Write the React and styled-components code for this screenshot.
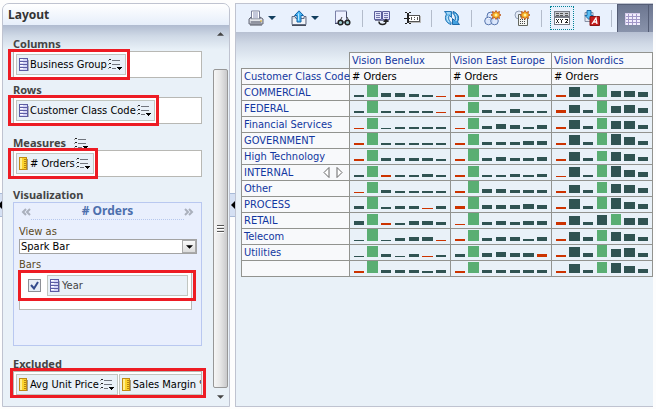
import React, { useState } from "react";
import styled, { createGlobalStyle } from "styled-components";

const GlobalStyle = createGlobalStyle`
  *, *::before, *::after { box-sizing: border-box; }
  body {
    margin: 0;
    background: #fdfdfd;
    color: #000;
    font-family: Tahoma, "DejaVu Sans Condensed", "Noto Sans", sans-serif;
    font-size: 11px;
    line-height: 14px;
  }
  h1, h2, h3 { font-family: Tahoma, "Noto Sans", sans-serif; }
  button, select { font: inherit; color: inherit; }
  button { border: 0; padding: 0; background: none; cursor: pointer; }
  svg { display: block; flex: none; }
`;

const Page = styled.div`
  display: flex;
  min-height: 100vh;
  padding: 3px 3px 3px 0;
`;

const Splitter = styled.div`
  flex: none;
  width: ${(p) => p.$width};
  padding-top: 190px;
  overflow: hidden;
`;

const SplitHandle = styled.button`
  display: flex;
  align-items: center;
  justify-content: flex-end;
  width: 100%;
  height: 24px;
  border: solid #a9bbd8;
  border-width: 1px 0;
  background: #d5e0f3;
`;

const Panel = styled.section`
  display: flex;
  flex-direction: column;
  border: 1px solid #bfc3d0;
  border-right-width: ${(p) => (p.$openRight ? "0" : "1px")};
  border-radius: ${(p) => p.$radius};
  background: #e9f1f8;
  overflow: hidden;
  flex: ${(p) => p.$flex};
  min-width: 0;
`;

const PanelTitle = styled.h1`
  margin: 0;
  height: 21px;
  padding: 3px 5px 0;
  background: linear-gradient(#ffffff, #e6eefa);
  color: #333;
  font-size: 12px;
  line-height: 16px;
`;

const PanelBody = styled.div`
  display: flex;
  flex: 1;
  background: linear-gradient(#b0bbd0, #cfd9e6 11px, #e9f1f8 25px);
`;

const Fields = styled.div`
  flex: 1;
  min-width: 0;
  padding: 12px 11px 8px 10px;
`;

const Field = styled.section`
  margin-bottom: ${(p) => p.$gap};
`;

const FieldTitle = styled.h2`
  display: flex;
  align-items: center;
  gap: 8px;
  margin: 0;
  height: 14px;
  color: #444;
  font-size: 11px;
  line-height: 14px;
`;

const DropZone = styled.div`
  display: flex;
  position: relative;
  height: 27px;
  padding: 2px;
  border: 1px solid #b8b8b4;
  background: #fff;
`;

const ClipRow = styled.div`
  display: flex;
  flex: 1;
  gap: 1px;
  min-width: 0;
  margin-right: -2px;
  overflow: hidden;
`;

const Chip = styled.div`
  display: flex;
  position: relative;
  flex: none;
  align-items: center;
  gap: 1px;
  height: 21px;
  padding: 0 2px 0 1px;
  border: 1px solid #c1c6c1;
  background: #e9f1f8;
  white-space: nowrap;
`;

const Highlight = styled.span`
  position: absolute;
  inset: ${(p) => p.$inset};
  border: 3px solid #ed1c24;
  pointer-events: none;
`;

const VisualBox = styled.div`
  display: flex;
  flex-direction: column;
  min-height: 144px;
  padding: 0 5px;
  border: 1px solid #b9c8f0;
  background: #e9effd;
`;

const Pager = styled.div`
  display: flex;
  align-items: center;
  justify-content: space-between;
  height: 17px;
  padding: 0 2px;
`;

const PagerTitle = styled.h3`
  margin: 0;
  flex: 1;
  align-self: stretch;
  border-bottom: 1px dotted #b5c7ee;
  color: #4d70ad;
  font-size: 12px;
  line-height: 16px;
  text-align: center;
`;

const Caption = styled.label`
  display: block;
  margin-top: ${(p) => p.$top};
  color: #5b4a24;
`;

const SelectWrap = styled.div`
  display: grid;
  grid-template-columns: 1fr 14px;
  align-items: center;
  height: 15px;
  margin-right: -1px;
  border: 1px solid #a3a3a3;
  background: #fff;
`;

const Select = styled.select`
  grid-area: 1 / 1 / 2 / 3;
  width: 100%;
  height: 13px;
  padding: 0 1px;
  border: 0;
  background: transparent;
  line-height: 13px;
  appearance: none;
`;

const SelectArrow = styled.span`
  display: grid;
  grid-area: 1 / 2;
  place-items: center;
  height: 13px;
  border: 1px solid #aaa;
  background: linear-gradient(#fafafa, #dcdcdc);
  pointer-events: none;
`;

const BarsList = styled.div`
  display: flex;
  position: relative;
  align-items: flex-start;
  height: 38px;
  margin-right: 4px;
  padding: 2px 3px 0 8px;
  border: 1px solid #b8b8b4;
  background: #fff;
`;

const BarsRow = styled.div`
  display: flex;
  flex: 1;
  align-items: center;
  gap: 6px;
`;

const CheckWrap = styled.span`
  display: grid;
  place-items: center;
  width: 13px;
  height: 13px;
  border: 1px solid #8c8f96;
  background: #e6edf5;
  & > * { grid-area: 1 / 1; }
`;

const Check = styled.input`
  width: 11px;
  height: 11px;
  margin: 0;
  appearance: none;
`;

const YearChip = styled.label`
  display: flex;
  flex: 1;
  align-items: center;
  gap: 2px;
  height: 21px;
  padding-left: 1px;
  border: 1px solid #c1c6c1;
  background: #e9f1f8;
  color: #444;
`;

const ScrollRail = styled.div`
  display: flex;
  flex: none;
  flex-direction: column;
  align-items: center;
  width: 16px;
  padding-right: 1px;
`;

const ScrollArrow = styled.button`
  display: grid;
  place-items: center;
  width: 100%;
  height: 18px;
`;

const ScrollTrack = styled.div`
  display: flex;
  flex: 1;
  flex-direction: column;
  width: 100%;
  padding-top: 26px;
`;

const ScrollThumb = styled.div`
  display: grid;
  flex: 1;
  place-items: center;
  border: 1px solid #979797;
  border-radius: 2px;
  background: linear-gradient(90deg, #f6f6f6, #e8e8e8 45%, #c9c9cb);
`;

const Toolbar = styled.div`
  display: flex;
  flex: none;
  align-items: center;
  height: 28px;
  padding-left: 12px;
  background: #e9f1fd;
  overflow: hidden;
`;

const Tool = styled.button`
  display: flex;
  flex: none;
  align-items: center;
  gap: 4px;
  margin-right: ${(p) => p.$after};
`;

const OutlinedTool = styled(Tool)`
  justify-content: center;
  width: 24px;
  height: 24px;
  border: 1px dotted #008296;
`;

const PressedTool = styled(Tool)`
  justify-content: center;
  width: 31px;
  height: 28px;
  border: solid #545d75;
  border-width: 1px 0 0 1px;
  background: linear-gradient(#6c7690, #8993ab);
`;

const Divider = styled.span`
  flex: none;
  width: 1px;
  height: 17px;
  margin-right: ${(p) => p.$after};
  background: #b3bccb;
`;

const Canvas = styled.div`
  flex: 1;
  padding: 20px 0 20px 5px;
  background: linear-gradient(#b7c0d2, #d0d9e6 12px, #e9f1f8 30px);
`;

const Pivot = styled.table`
  width: 100%;
  table-layout: fixed;
  border-collapse: collapse;
  line-height: 14px;
`;

const LabelCol = styled.col`
  width: 108px;
`;

const Corner = styled.td`
  padding: 0;
`;

const HeadCell = styled.th`
  height: 16px;
  padding: 0 0 0 2px;
  border: 1px solid #92938f;
  background: #f8f9fb;
  color: ${(p) => (p.$plain ? "#000" : "#1237a0")};
  font-weight: 400;
  line-height: 15px;
  text-align: left;
  white-space: nowrap;
`;

const HeadInner = styled.span`
  display: flex;
  align-items: center;
  justify-content: space-between;
  height: 15px;
`;

const MoveMarks = styled.span`
  display: flex;
  gap: 6px;
  padding-right: 6px;
`;

const DataCell = styled.td`
  height: 16px;
  padding: 0 0 0 4px;
  border: 1px solid #92938f;
  background: #e9f1f8;
  vertical-align: top;
`;

const ColumnIcon = () => (
  <svg width="11" height="15" viewBox="0 0 11 15" shapeRendering="crispEdges" aria-hidden="true">
    <path d="M3 14h8V3h-1v10H3z" fill="#a9acbb" />
    <rect x="1" y="1" width="9" height="13" fill="#5c5ca3" />
    <path d="M2 2h7v2H2zM2 5h7v2H2zM2 8h7v2H2zM2 11h7v2H2z" fill="#d5d5f7" />
    <path d="M2 2h3v1H2zM2 5h3v1H2zM2 8h3v1H2zM2 11h3v1H2z" fill="#fff" />
  </svg>
);

const MeasureIcon = () => (
  <svg width="11" height="15" viewBox="0 0 11 15" shapeRendering="crispEdges" aria-hidden="true">
    <path d="M3 14h7V3h-1v10H3z" fill="#a29a87" />
    <rect x="1" y="1" width="8" height="13" fill="#c08a14" />
    <rect x="2" y="2" width="6" height="11" fill="#fbd32c" />
    <path d="M2 2h2v11H2z" fill="#ffee8c" />
    <path d="M6 3h2v1H6zM6 5h2v1H6zM6 7h2v1H6zM6 9h2v1H6zM6 11h2v1H6z" fill="#b8860f" />
  </svg>
);

const MenuIcon = () => (
  <svg width="15" height="13" viewBox="0 0 15 13" shapeRendering="crispEdges" aria-hidden="true">
    <path d="M1 1h2v1H1zM1 5h2v1H1zM1 9h2v1H1z" fill="#222" />
    <path d="M0 2h1v1H0zM0 6h1v1H0zM0 10h1v1H0z" fill="#999" />
    <path d="M4 2h8v1H4zM4 6h8v1H4zM4 10h4v1H4z" fill="#70757d" />
    <path d="M9 9h5v1H9zM10 10h3v1h-3zM11 11h1v1h-1z" fill="#000" />
  </svg>
);

const Triangle = ({ up, color = "#000", width = 7 }) => (
  <svg width={width} height="4" viewBox="0 0 8 4" aria-hidden="true">
    <path d={up ? "M0 4L4 0l4 4z" : "M0 0h8L4 4z"} fill={color} />
  </svg>
);

const SideArrow = () => (
  <svg width="5" height="8" viewBox="0 0 5 8" aria-hidden="true">
    <path d="M5 0v8L1 4z" fill="#000" />
  </svg>
);

const Chevrons = ({ right }) => (
  <svg width="10" height="8" viewBox="0 0 10 8" aria-hidden="true">
    <path
      d={right ? "M1 1l3 3-3 3M5 1l3 3-3 3" : "M5 1L2 4l3 3M9 1L6 4l3 3"}
      fill="none"
      stroke="#aab0bc"
      strokeWidth="2"
    />
  </svg>
);

const Grip = () => (
  <svg width="8" height="8" viewBox="0 0 8 8" shapeRendering="crispEdges" aria-hidden="true">
    <path d="M0 0h7v1H0zM0 3h7v1H0zM0 6h7v1H0z" fill="#555" />
    <path d="M0 1h7v1H0zM0 4h7v1H0zM0 7h7v1H0z" fill="#fff" />
  </svg>
);

const Tick = () => (
  <svg width="9" height="9" viewBox="0 0 9 9" aria-hidden="true">
    <path d="M1 4l3 3.5L8 1" fill="none" stroke="#334b8c" strokeWidth="2" />
  </svg>
);

const PrintIcon = () => (
  <svg width="16" height="16" viewBox="0 0 16 16" aria-hidden="true">
    <path d="M3.5 8V1h8v7" fill="#fff" stroke="#7c819a" />
    <path d="M5 3h5M5 5h5M5 7h5" stroke="#8990b5" />
    <path d="M1 9l2-2v2h9V7l3 2v5H1z" fill="#c5c8d1" stroke="#666b7a" />
    <path d="M2 10h12" stroke="#fff" />
    <path d="M3 12h10" stroke="#5c6070" />
    <path d="M2 15h12" stroke="#4a4d57" />
    <path d="M12 11h2" stroke="#e3b322" />
  </svg>
);

const ExportIcon = () => (
  <svg width="16" height="16" viewBox="0 0 16 16" aria-hidden="true">
    <path d="M1 6.5h3l1 2h8v-2h2v8H1z" fill="#d7dce5" stroke="#626c82" />
    <path d="M2 9h12v5H2z" fill="#f2f4f8" />
    <path d="M1 15.500h14" stroke="#474d5a" />
    <path d="M8 .8L3.500 5.500h2.500V12h4V5.500h2.500z" fill="#48b6f4" stroke="#1464a8" />
    <path d="M7.500 3.500v7" stroke="#b7e6ff" />
  </svg>
);

const PreviewIcon = () => (
  <svg width="17" height="16" viewBox="0 0 17 16" aria-hidden="true">
    <path d="M1.500 1h11v12h-11z" fill="#edf0ff" stroke="#797fa7" />
    <path d="M1 13.500h5M12.500 2v6" stroke="#454a69" />
    <path d="M6 11l2-4M15 11l-2-4" stroke="#444" fill="none" />
    <circle cx="6.500" cy="12.500" r="2.300" fill="#9acbd0" stroke="#222" strokeWidth="1.500" />
    <circle cx="13.500" cy="12.500" r="2.300" fill="#9acbd0" stroke="#222" strokeWidth="1.500" />
    <path d="M9 12h2" stroke="#222" />
  </svg>
);

const SwapIcon = () => (
  <svg width="16" height="16" viewBox="0 0 16 16" aria-hidden="true">
    <path d="M.5 1.500h7v8h-7zM8.500 1.500h7v8h-7z" fill="#e3e5fb" stroke="#5b5f9a" />
    <path d="M2 3.500h4M2 5.500h4M2 7.500h4M10 3.500h4M10 5.500h4M10 7.500h4" stroke="#7377ac" />
    <path d="M1 10.500h14" stroke="#777b99" />
    <path d="M5 11.500c0 4 7 4 7 0" fill="none" stroke="#222" strokeWidth="1.500" />
    <path d="M9 12l3-3.500 3 3.500z" fill="#222" />
  </svg>
);

const RenameIcon = () => (
  <svg width="17" height="16" viewBox="0 0 17 16" shapeRendering="crispEdges" aria-hidden="true">
    <path d="M5 6h12v7H5z" fill="#bbb" />
    <path d="M4 5h12v7H4z" fill="#555" />
    <path d="M5 6h10v5H5z" fill="#fff" />
    <path d="M7 7h1v3H7zM10 7h1v1h-1zM10 9h1v1h-1zM13 7h1v3h-1z" fill="#555" />
    <path d="M1 2h2v1H1zM5 2h2v1H5zM3 3h2v10H3zM1 13h2v1H1zM5 13h2v1H5zM0 8h3v1H0zM5 8h1v1H5z" fill="#222" />
  </svg>
);

const RefreshIcon = () => (
  <svg width="16" height="16" viewBox="0 0 16 16" aria-hidden="true">
    <path d="M.5 1.500h7v6L5.500 5.500C4 7.500 4.500 10 7 12.500v2C2 13 0 8.500 2.500 4z" fill="#71bdec" stroke="#2476b7" />
    <path d="M15.500 14.500h-7v-6l2 2C12 8.500 11.500 6 9 3.500v-2c5 1.500 7 6 4.500 10.500z" fill="#42a0df" stroke="#1c69a8" />
    <path d="M3 3h3M3.500 6c-1 2 0 4 1.500 6M11 4c2 2 2 5 1 7" fill="none" stroke="#cfeeff" />
  </svg>
);

const Burst = ({ x, y }) => (
  <g transform={`translate(${x} ${y})`}>
    <path
      d="M0-4.500l1.200 2L3.500-3.500 3-1.200 5 0 3 1.200l.5 2.300-2.300-1L0 4.500l-1.200-2-2.300 1 .5-2.300L-5 0l2-1.200-.5-2.300 2.300 1z"
      fill="#f5ac24"
      stroke="#b84a16"
      strokeWidth=".8"
    />
    <circle r="1.500" fill="#fff3a0" />
  </g>
);

const GroupIcon = () => (
  <svg width="17" height="16" viewBox="0 0 17 16" aria-hidden="true">
    <g fill="#d7e5fb" fillOpacity=".8" stroke="#5876ae">
      <circle cx="7" cy="6" r="4" />
      <circle cx="4.500" cy="11" r="3.800" />
      <circle cx="10.500" cy="11" r="3.800" />
    </g>
    <path d="M3 9c1-1 2-1 3 0M9 9c1-1 2-1 3 0" fill="none" stroke="#fff" />
    <Burst x={12} y={5} />
  </svg>
);

const CalcIcon = () => (
  <svg width="16" height="16" viewBox="0 0 16 16" aria-hidden="true">
    <circle cx="5" cy="5" r="4" fill="#e3ebf7" stroke="#93a1ba" />
    <path d="M4.500 4.500h9v11h-9z" fill="#f4f5f2" stroke="#62665e" />
    <path d="M6 6.500h6" stroke="#7f967e" strokeWidth="2" />
    <path d="M6 9.500h6M6 11.500h6M6 13.500h6" stroke="#444" strokeDasharray="1 1" />
    <Burst x={11} y={5} />
  </svg>
);

const RowsIcon = () => (
  <svg width="16" height="16" viewBox="0 0 16 16" shapeRendering="crispEdges" aria-hidden="true">
    <path d="M0 1h16v14H0z" fill="#777b86" />
    <path d="M1 2h14v4H1z" fill="#c7cad1" />
    <path d="M2 3h3v1H2zM6 3h3v1H6zM11 3h3v1h-3zM2 5h3v1H2zM6 5h3v1H6zM11 5h3v1h-3z" fill="#555" />
    <path d="M1 8h14v6H1z" fill="#fff" />
    <path d="M2 9h1v1H2zM4 9h1v1H4zM3 10h1v2H3zM2 12h1v1H2zM4 12h1v1H4zM6 9h1v1H6zM8 9h1v1H8zM7 10h1v3H7zM11 9h3v1h-3zM13 10h1v1h-1zM12 11h1v1h-1zM11 12h3v1h-3z" fill="#222" />
  </svg>
);

const ImportIcon = () => (
  <svg width="16" height="16" viewBox="0 0 16 16" aria-hidden="true">
    <path d="M1 2.500h8v9H1z" fill="#e3e7f0" stroke="#8791a5" />
    <path d="M3 .5h4v5h2L5 9.500 1 5.500h2z" fill="#58bdf2" stroke="#176aa7" />
    <path d="M6 6.500h9.500v9H6z" fill="#c51d1d" stroke="#871515" />
    <path d="M8 14l4-6 1 6M9.500 12h3.500" fill="none" stroke="#fff" strokeWidth="1.300" />
  </svg>
);

const GridIcon = () => (
  <svg width="16" height="14" viewBox="0 0 16 14" shapeRendering="crispEdges" aria-hidden="true">
    <path d="M0 1h15v12H0z" fill="#f2eefc" />
    <path d="M0 4h15v1H0zM0 7h15v1H0zM0 10h15v1H0zM3 1h1v12H3zM7 1h1v12H7zM11 1h1v12h-1z" fill="#a197c7" />
    <path d="M0 1h15v1H0zM0 1h1v12H0z" fill="#d4caea" />
  </svg>
);

const MoveArrow = ({ right }) => (
  <svg width="7" height="11" viewBox="0 0 7 11" aria-hidden="true">
    <path d={right ? "M1 .5v10l5-5z" : "M6 .5v10l-5-5z"} fill="#fff" stroke="#666" />
  </svg>
);

const BAR_X = [0, 13, 27, 41, 55, 68, 82];
const BAR_W = [10, 11, 10, 10, 10, 11, 10];

function Spark({ values, low, high }) {
  return (
    <svg width="92" height="12" viewBox="0 0 92 12" shapeRendering="crispEdges" role="img" aria-label="Orders by year">
      {values.map((v, i) => (
        <rect
          key={i}
          x={BAR_X[i]}
          y={12 - v}
          width={BAR_W[i]}
          height={v}
          fill={i === low ? "#cc3300" : i === high ? "#5aae73" : "#305352"}
        />
      ))}
    </svg>
  );
}

// Each series: seven yearly values, index of the lowest, index of the highest.
const ROWS = [
  ["COMMERCIAL", [[2, 12, 4, 4, 3, 2, 1], 6, 1], [[2, 12, 2, 3, 4, 3, 3], 0, 1], [[2, 10, 3, 12, 6, 6, 5], 0, 3]],
  ["FEDERAL", [[2, 12, 2, 2, 2, 2, 1], 6, 1], [[2, 11, 3, 2, 4, 2, 2], 0, 1], [[3, 8, 3, 12, 7, 8, 5], 0, 3]],
  ["Financial Services", [[1, 11, 1, 2, 2, 2, 2], 0, 1], [[1, 11, 3, 5, 4, 2, 4], 0, 1], [[2, 9, 3, 11, 8, 8, 4], 0, 3]],
  ["GOVERNMENT", [[2, 12, 2, 2, 2, 2, 2], 0, 1], [[2, 11, 3, 3, 3, 4, 4], 0, 1], [[2, 10, 3, 12, 11, 8, 4], 0, 3]],
  ["High Technology", [[2, 11, 3, 3, 3, 3, 2], 0, 1], [[2, 12, 3, 4, 3, 3, 4], 0, 1], [[2, 9, 3, 10, 9, 7, 4], 0, 3]],
  ["INTERNAL", [[2, 11, 2, 2, 2, 3, 2], 2, 1], [[2, 11, 2, 2, 3, 2, 3], 0, 1], [[1, 10, 2, 12, 11, 7, 5], 0, 3]],
  ["Other", [[1, 11, 3, 2, 2, 2, 2], 0, 1], [[2, 12, 4, 4, 3, 3, 3], 0, 1], [[2, 8, 3, 11, 9, 8, 5], 0, 3]],
  ["PROCESS", [[3, 12, 2, 3, 3, 1, 3], 5, 1], [[3, 12, 4, 4, 4, 5, 4], 0, 1], [[2, 10, 3, 12, 11, 7, 5], 0, 3]],
  ["RETAIL", [[4, 11, 2, 2, 4, 4, 3], 2, 1], [[1, 12, 3, 4, 3, 4, 4], 0, 1], [[3, 9, 3, 10, 11, 7, 7], 0, 4]],
  ["Telecom", [[1, 12, 1, 3, 4, 4, 1], 6, 1], [[2, 11, 3, 4, 4, 2, 4], 0, 1], [[2, 9, 4, 11, 9, 7, 4], 0, 3]],
  ["Utilities", [[1, 11, 3, 1, 3, 1, 2], 5, 1], [[3, 11, 4, 5, 4, 4, 3], 6, 1], [[2, 10, 4, 12, 8, 9, 4], 0, 3]],
  ["", [[2, 12, 3, 3, 3, 2, 3], 0, 1], [[2, 11, 3, 3, 3, 3, 3], 0, 1], [[2, 9, 3, 11, 10, 7, 4], 0, 3]],
];

const REGIONS = ["Vision Benelux", "Vision East Europe", "Vision Nordics"];

function FieldChip({ icon, label, marked }) {
  return (
    <Chip>
      {icon}
      <span>{label}</span>
      <button aria-label={`${label} options`}>
        <MenuIcon />
      </button>
      {marked && <Highlight $inset="-6px -5px -6px -9px" />}
    </Chip>
  );
}

function LayoutPanel() {
  const [checked, setChecked] = useState(true);
  return (
    <Panel $radius="7px 7px 0 0" $flex="0 0 228px">
      <PanelTitle>Layout</PanelTitle>
      <PanelBody>
        <Fields>
          <Field $gap="5px">
            <FieldTitle>Columns</FieldTitle>
            <DropZone>
              <FieldChip icon={<ColumnIcon />} label="Business Group" marked />
            </DropZone>
          </Field>
          <Field $gap="12px">
            <FieldTitle>Rows</FieldTitle>
            <DropZone>
              <FieldChip icon={<ColumnIcon />} label="Customer Class Code" marked />
            </DropZone>
          </Field>
          <Field $gap="11px">
            <FieldTitle>
              Measures
              <button aria-label="Measures options">
                <MenuIcon />
              </button>
            </FieldTitle>
            <DropZone>
              <FieldChip icon={<MeasureIcon />} label="# Orders" marked />
            </DropZone>
          </Field>
          <Field $gap="11px">
            <FieldTitle>Visualization</FieldTitle>
            <VisualBox>
              <Pager>
                <button aria-label="Previous measure">
                  <Chevrons />
                </button>
                <PagerTitle># Orders</PagerTitle>
                <button aria-label="Next measure">
                  <Chevrons right />
                </button>
              </Pager>
              <Caption htmlFor="view-as" $top="5px">
                View as
              </Caption>
              <SelectWrap>
                <Select id="view-as" defaultValue="Spark Bar">
                  <option>Spark Bar</option>
                </Select>
                <SelectArrow>
                  <Triangle />
                </SelectArrow>
              </SelectWrap>
              <Caption as="div" $top="4px">
                Bars
              </Caption>
              <BarsList>
                <BarsRow>
                  <CheckWrap>
                    {checked && <Tick />}
                    <Check id="bars-year" type="checkbox" checked={checked} onChange={(e) => setChecked(e.target.checked)} />
                  </CheckWrap>
                  <YearChip htmlFor="bars-year">
                    <ColumnIcon />
                    Year
                  </YearChip>
                </BarsRow>
                <Highlight $inset="-3px -5px 8px -2px" />
              </BarsList>
            </VisualBox>
          </Field>
          <Field $gap="0">
            <FieldTitle>Excluded</FieldTitle>
            <DropZone>
              <ClipRow>
                <FieldChip icon={<MeasureIcon />} label="Avg Unit Price" />
                <FieldChip icon={<MeasureIcon />} label="Sales Margin %" />
              </ClipRow>
              <Highlight $inset="-4px -5px -1px -4px" />
            </DropZone>
          </Field>
        </Fields>
        <ScrollRail>
          <ScrollArrow aria-label="Scroll up">
            <Triangle up color="#444" />
          </ScrollArrow>
          <ScrollTrack>
            <ScrollThumb>
              <Grip />
            </ScrollThumb>
          </ScrollTrack>
          <ScrollArrow aria-label="Scroll down">
            <Triangle color="#444" />
          </ScrollArrow>
        </ScrollRail>
      </PanelBody>
    </Panel>
  );
}

function PivotToolbar() {
  return (
    <Toolbar>
      <Tool aria-label="Print" $after="15px">
        <PrintIcon />
        <Triangle color="#123e5e" width={8} />
      </Tool>
      <Tool aria-label="Export" $after="15px">
        <ExportIcon />
        <Triangle color="#123e5e" width={8} />
      </Tool>
      <Tool aria-label="Preview" $after="11px">
        <PreviewIcon />
      </Tool>
      <Divider $after="11px" />
      <Tool aria-label="Swap rows and columns" $after="14px">
        <SwapIcon />
      </Tool>
      <Tool aria-label="Rename" $after="10px">
        <RenameIcon />
      </Tool>
      <Divider $after="12px" />
      <Tool aria-label="Refresh" $after="11px">
        <RefreshIcon />
      </Tool>
      <Divider $after="12px" />
      <Tool aria-label="New group" $after="13px">
        <GroupIcon />
      </Tool>
      <Tool aria-label="New calculated item" $after="11px">
        <CalcIcon />
      </Tool>
      <Divider $after="8px" />
      <OutlinedTool aria-label="Edit layout" $after="10px">
        <RowsIcon />
      </OutlinedTool>
      <Tool aria-label="Import formatting" $after="11px">
        <ImportIcon />
      </Tool>
      <Divider $after="5px" />
      <PressedTool aria-label="Table view" $after="0">
        <GridIcon />
      </PressedTool>
      <PressedTool aria-label="Chart view" $after="0" />
    </Toolbar>
  );
}

function PivotTable() {
  return (
    <Pivot>
      <colgroup>
        <LabelCol />
        {REGIONS.map((r) => (
          <col key={r} />
        ))}
      </colgroup>
      <thead>
        <tr>
          <Corner />
          {REGIONS.map((r) => (
            <HeadCell key={r} scope="col">
              {r}
            </HeadCell>
          ))}
        </tr>
        <tr>
          <HeadCell scope="col">Customer Class Code</HeadCell>
          {REGIONS.map((r) => (
            <HeadCell key={r} scope="col" $plain>
              # Orders
            </HeadCell>
          ))}
        </tr>
      </thead>
      <tbody>
        {ROWS.map(([name, ...series]) => (
          <tr key={name}>
            <HeadCell scope="row">
              <HeadInner>
                {name}
                {name === "INTERNAL" && (
                  <MoveMarks>
                    <MoveArrow />
                    <MoveArrow right />
                  </MoveMarks>
                )}
              </HeadInner>
            </HeadCell>
            {series.map(([values, low, high], i) => (
              <DataCell key={i}>
                <Spark values={values} low={low} high={high} />
              </DataCell>
            ))}
          </tr>
        ))}
      </tbody>
    </Pivot>
  );
}

export default function App() {
  return (
    <>
      <GlobalStyle />
      <Page>
        <Splitter $width="2px">
          <SplitHandle aria-label="Collapse side panel">
            <SideArrow />
          </SplitHandle>
        </Splitter>
        <LayoutPanel />
        <Splitter $width="5px">
          <SplitHandle aria-label="Collapse layout panel">
            <SideArrow />
          </SplitHandle>
        </Splitter>
        <Panel as="main" $radius="0" $flex="1" $openRight>
          <PivotToolbar />
          <Canvas>
            <PivotTable />
          </Canvas>
        </Panel>
      </Page>
    </>
  );
}
